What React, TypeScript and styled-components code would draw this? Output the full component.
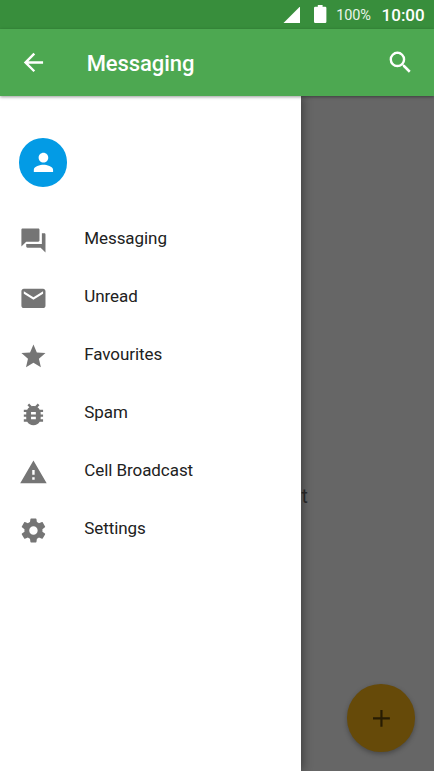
import React from 'react';
import styled, { createGlobalStyle } from 'styled-components';

const Global = createGlobalStyle`
  * { box-sizing: border-box; }
  html, body { margin: 0; padding: 0; overflow: hidden; }
  body { font-family: Roboto, sans-serif; }
`;

const Screen = styled.div`
  display: flex;
  flex-direction: column;
  width: 434px;
  height: 771px;
  overflow: hidden;
  background: #666;
`;

const StatusBar = styled.header`
  display: flex;
  align-items: center;
  height: 28.9px;
  flex: none;
  padding-left: 282.5px;
  background: #388e3c;
  color: #fff;
`;

const Signal = styled.svg`
  width: 17.5px;
  height: 17.5px;
  flex: none;
`;

const Battery = styled.svg`
  width: 12.4px;
  height: 18px;
  margin-left: 14.2px;
  flex: none;
`;

const Percent = styled.span`
  width: 35px;
  margin-left: 9.6px;
  font-size: 14.5px;
  line-height: 20px;
  padding-top: 3px;
  letter-spacing: -0.1px;
  color: #e9f4ea;
`;

const Clock = styled.span`
  margin-left: 10.4px;
  font-size: 17px;
  line-height: 20px;
  padding-top: 2px;
  font-weight: 500;
`;

const AppBar = styled.nav`
  display: flex;
  align-items: center;
  height: 67.5px;
  flex: none;
  padding: 0 19.2px 0 18.8px;
  background: #4da851;
  color: #fff;
  position: relative;
  z-index: 2;
  box-shadow: 0 1px 3px rgba(0, 0, 0, 0.4);
`;

const IconButton = styled.button`
  display: flex;
  border: 0;
  padding: 0;
  background: none;
  color: inherit;
`;

const Title = styled.h1`
  flex: 1;
  margin: 2px 0 0 39px;
  font-size: 22px;
  line-height: 28px;
  font-weight: 500;
  letter-spacing: -0.08px;
`;

const Glyph = styled.svg<{ $color?: string }>`
  display: block;
  width: 28.9px;
  height: 28.9px;
  flex: none;
  fill: ${(p) => p.$color ?? 'currentColor'};
`;

const Body = styled.main`
  display: flex;
  flex: 1;
  min-height: 0;
`;

const Drawer = styled.aside`
  width: 301.4px;
  flex: none;
  padding: 42.1px 0 0 19.3px;
  background: #fff;
  position: relative;
  z-index: 1;
  box-shadow: 1px 0 10px rgba(0, 0, 0, 0.45);
`;

const Avatar = styled.div`
  display: flex;
  align-items: center;
  justify-content: center;
  width: 48.2px;
  height: 48.2px;
  border-radius: 50%;
  background: #039be5;
`;

const Menu = styled.ul`
  list-style: none;
  margin: 24.7px 0 0;
  padding: 0;
`;

const MenuItem = styled.li`
  display: flex;
  align-items: center;
  height: 57.87px;
  padding-top: 1px;
`;

const Label = styled.span`
  margin: -4.6px 0 0 36px;
  font-size: 17px;
  line-height: 22px;
  letter-spacing: -0.06px;
  color: #212121;
`;

const Backdrop = styled.section`
  display: flex;
  flex-direction: column;
  flex: 1;
  align-items: flex-end;
  justify-content: space-between;
  padding: 390px 19.3px 19.3px 0;
`;

const EmptyText = styled.span`
  align-self: flex-start;
  width: 8px;
  font-size: 19.3px;
  line-height: 22px;
  color: #2b2b2b;
`;

const Fab = styled.button`
  display: flex;
  align-items: center;
  justify-content: center;
  width: 67.5px;
  height: 67.5px;
  border: 0;
  padding: 0;
  border-radius: 50%;
  background: #664a09;
  box-shadow: 0 2px 5px rgba(0, 0, 0, 0.3);
`;

const paths = {
  back: 'M20 11H7.83l5.59-5.59L12 4l-8 8 8 8 1.41-1.41L7.83 13H20v-2z',
  search:
    'M15.5 14h-.79l-.28-.27A6.471 6.471 0 0 0 16 9.5 6.5 6.5 0 1 0 9.5 16c1.61 0 3.09-.59 4.23-1.57l.27.28v.79l5 4.99L20.49 19l-4.99-5zm-6 0C7.01 14 5 11.99 5 9.5S7.01 5 9.5 5 14 7.01 14 9.5 11.99 14 9.5 14z',
  person:
    'M12 12c2.21 0 4-1.79 4-4s-1.79-4-4-4-4 1.79-4 4 1.79 4 4 4zm0 2c-2.67 0-8 1.34-8 4v2h16v-2c0-2.66-5.33-4-8-4z',
  forum:
    'M21 6h-2v9H6v2c0 .55.45 1 1 1h11l4 4V7c0-.55-.45-1-1-1zm-4 6V3c0-.55-.45-1-1-1H3c-.55 0-1 .45-1 1v14l4-4h10c.55 0 1-.45 1-1z',
  mail: 'M20 4H4c-1.1 0-1.99.9-1.99 2L2 18c0 1.1.9 2 2 2h16c1.1 0 2-.9 2-2V6c0-1.1-.9-2-2-2zm0 4l-8 5-8-5V6l8 5 8-5v2z',
  star: 'M12 17.27L18.18 21l-1.64-7.03L22 9.24l-7.19-.61L12 2 9.19 8.63 2 9.24l5.46 4.73L5.82 21z',
  bug: 'M20 8h-2.81c-.45-.78-1.07-1.45-1.82-1.96L17 4.41 15.59 3l-2.17 2.17C12.96 5.06 12.49 5 12 5c-.49 0-.96.06-1.41.17L8.41 3 7 4.41l1.62 1.63C7.88 6.55 7.26 7.22 6.81 8H4v2h2.09c-.05.33-.09.66-.09 1v1H4v2h2v1c0 .34.04.67.09 1H4v2h2.81c1.04 1.79 2.97 3 5.19 3s4.15-1.21 5.19-3H20v-2h-2.09c.05-.33.09-.66.09-1v-1h2v-2h-2v-1c0-.34-.04-.67-.09-1H20V8zm-6 8h-4v-2h4v2zm0-4h-4v-2h4v2z',
  warning: 'M1 21h22L12 2 1 21zm12-3h-2v-2h2v2zm0-4h-2v-4h2v4z',
  settings:
    'M19.43 12.98c.04-.32.07-.64.07-.98s-.03-.66-.07-.98l2.11-1.65c.19-.15.24-.42.12-.64l-2-3.46c-.12-.22-.39-.3-.61-.22l-2.49 1c-.52-.4-1.08-.73-1.69-.98l-.38-2.65C14.46 2.18 14.25 2 14 2h-4c-.25 0-.46.18-.49.42l-.38 2.65c-.61.25-1.17.59-1.69.98l-2.49-1c-.23-.09-.49 0-.61.22l-2 3.46c-.13.22-.07.49.12.64l2.11 1.65c-.04.32-.07.65-.07.98s.03.66.07.98l-2.11 1.65c-.19.15-.24.42-.12.64l2 3.46c.12.22.39.3.61.22l2.49-1c.52.4 1.08.73 1.69.98l.38 2.65c.03.24.24.42.49.42h4c.25 0 .46-.18.49-.42l.38-2.65c.61-.25 1.17-.59 1.69-.98l2.49 1c.23.09.49 0 .61-.22l2-3.46c.12-.22.07-.49-.12-.64l-2.11-1.65zM12 15.5c-1.93 0-3.5-1.57-3.5-3.5s1.57-3.5 3.5-3.5 3.5 1.57 3.5 3.5-1.57 3.5-3.5 3.5z',
  plus: 'M19 12.9h-6.1V19h-1.8v-6.1H5v-1.8h6.1V5h1.8v6.1H19v1.8z',
};

type IconName = keyof typeof paths;

const Icon = ({ name, color }: { name: IconName; color?: string }) => (
  <Glyph viewBox="0 0 24 24" $color={color} aria-hidden="true">
    <path d={paths[name]} />
  </Glyph>
);

const items: { icon: IconName; label: string }[] = [
  { icon: 'forum', label: 'Messaging' },
  { icon: 'mail', label: 'Unread' },
  { icon: 'star', label: 'Favourites' },
  { icon: 'bug', label: 'Spam' },
  { icon: 'warning', label: 'Cell Broadcast' },
  { icon: 'settings', label: 'Settings' },
];

export default function App() {
  return (
    <>
      <Global />
      <Screen>
        <StatusBar>
          <Signal viewBox="0 0 17.5 17.5">
            <path d="M17.5 0v17.5H0z" fill="#fff" />
          </Signal>
          <Battery viewBox="0 0 12.4 18">
            <path d="M3.8 0h4.8v1.8h2.6q1.2 0 1.2 1.2v13.8q0 1.2-1.2 1.2H1.2Q0 18 0 16.8V3q0-1.2 1.2-1.2h2.6z" fill="#fff" />
          </Battery>
          <Percent>100%</Percent>
          <Clock>10:00</Clock>
        </StatusBar>
        <AppBar>
          <IconButton aria-label="Back">
            <Icon name="back" />
          </IconButton>
          <Title>Messaging</Title>
          <IconButton aria-label="Search">
            <Icon name="search" />
          </IconButton>
        </AppBar>
        <Body>
          <Drawer>
            <Avatar>
              <Icon name="person" color="#fff" />
            </Avatar>
            <Menu>
              {items.map((item) => (
                <MenuItem key={item.label}>
                  <Icon name={item.icon} color="#757575" />
                  <Label>{item.label}</Label>
                </MenuItem>
              ))}
            </Menu>
          </Drawer>
          <Backdrop>
            <EmptyText>t</EmptyText>
            <Fab aria-label="New message">
              <Icon name="plus" color="#271c03" />
            </Fab>
          </Backdrop>
        </Body>
      </Screen>
    </>
  );
}
